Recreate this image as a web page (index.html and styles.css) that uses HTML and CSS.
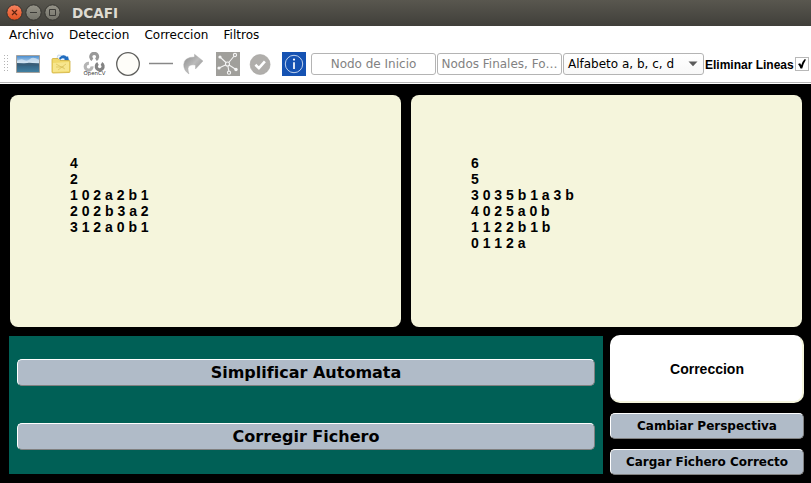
FILE: index.html
```html
<!DOCTYPE html>
<html lang="es">
<head>
<meta charset="utf-8">
<title>DCAFI</title>
<link rel="stylesheet" href="styles.css">
</head>
<body>
<header class="titlebar">
  <svg class="window-controls" width="60" height="26" viewBox="0 0 60 26">
    <defs>
      <linearGradient id="close" x2="0" y2="1"><stop stop-color="#f78461"/><stop offset="1" stop-color="#e2501f"/></linearGradient>
      <linearGradient id="ctrl" x2="0" y2="1"><stop stop-color="#969489"/><stop offset="1" stop-color="#74736a"/></linearGradient>
    </defs>
    <g stroke="#33322e">
      <circle cx="14.5" cy="12.5" r="7.7" fill="url(#close)"/>
      <circle cx="33.5" cy="12.5" r="7.7" fill="url(#ctrl)"/>
      <circle cx="52.5" cy="12.5" r="7.7" fill="url(#ctrl)"/>
    </g>
    <path d="M12 10l5 5M17 10l-5 5" stroke="#5d2411" stroke-width="1.2"/>
    <path d="M30 12.500h7M49.500 9.500h6v6h-6z" stroke="#3c3b37" fill="none"/>
  </svg>
  <h1 class="title">DCAFI</h1>
</header>
<nav class="menu">
  <span>Archivo</span><span>Deteccion</span><span>Correccion</span><span>Filtros</span>
</nav>
<div class="toolbar">
  <div class="grip"></div>
  <div class="tools">
    <svg viewBox="0 0 24 24">
      <defs><linearGradient id="sky" x2="0" y2="1"><stop stop-color="#4389cd"/><stop offset=".45" stop-color="#c5dcef"/><stop offset=".5" stop-color="#325d7c"/><stop offset="1" stop-color="#4382a4"/></linearGradient></defs>
      <path d="M.5 3.500h23v17H.5z" fill="url(#sky)" stroke="#a5a19c"/>
      <path d="M1 9q4-3 7-1t6-1 9 1v3H1z" fill="#dce8f2" opacity=".7"/>
      <path d="M1 11l7 .5 5-.8 10 .8v2H1z" fill="#3a5e78"/>
    </svg>
    <svg viewBox="0 0 24 24">
      <path d="M7 9l2-6 8 1 4 5-2 5H8z" fill="#f1f7fd" stroke="#9bb9d8" stroke-width=".5"/>
      <path d="M10 6q4-5 8-1l1-1 1 5-5-1 1-1q-3-2-5 1z" fill="#216dc0"/>
      <path d="M3 7.500q0-1 1-1h5l2 2h9q1 0 1 1v10q0 1-1 1L4 21q-1 0-1-1z" fill="#f1d96b" stroke="#cfae3a" stroke-width=".8"/>
      <path d="M4 11l16-1v9L4 20z" fill="#f7e68e"/>
      <path d="M7 12l9 5M9 18l8-6M7 15h8" stroke="#d9bf57" stroke-width=".7" fill="none"/>
    </svg>
    <svg viewBox="0 0 24 24">
      <g fill="none" stroke-width="3.200">
        <path d="M9.500 7.700A3.400 3.400 0 1 1 12.900 7.700" stroke="#999"/>
        <path d="M5.900 11.300A3.400 3.400 0 1 0 9 14.400" stroke="#b4b4b4"/>
        <path d="M15 11.500A3.400 3.400 0 1 0 18.400 11.500" stroke="#838383"/>
      </g>
      <text x="11.500" y="23.200" class="logo-text">OpenCV</text>
    </svg>
    <svg viewBox="0 0 24 24"><circle cx="12" cy="12" r="11.300" fill="#fefdf9" stroke="#5f5f5d" stroke-width="1.300"/></svg>
    <svg viewBox="0 0 24 24"><path d="M0 11.500h24" stroke="#888" stroke-width="1.500"/></svg>
    <svg viewBox="0.500 0 24 24">
      <defs><linearGradient id="arrow" x2="1" y2="1"><stop stop-color="#898989"/><stop offset=".5" stop-color="#bbb"/><stop offset="1" stop-color="#888"/></linearGradient></defs>
      <path d="M7.500 22Q2 18.500 2.200 12.500 2.500 5 13 5V2.200L21.500 9 14 17v-4Q7 12 6.500 16.500 6.400 19 7.500 22z" fill="url(#arrow)" stroke="#a8a8a8" stroke-width=".4"/>
    </svg>
    <svg class="graph" viewBox="0 0 24 24">
      <path d="M11.500 12L4 5M11.500 12L19 3M11.500 12L3 16M11.500 12L20 17.500M11.500 12L13 20" stroke="#f4f4f4" stroke-width="1.100"/>
      <g fill="#f6f6f6"><circle cx="4" cy="5" r="1.600"/><circle cx="3" cy="16" r="1.600"/><circle cx="20" cy="17.500" r="1.700"/></g>
      <g fill="#a09f9b" stroke="#f4f4f4" stroke-width="1.100"><circle cx="19" cy="3" r="1.600"/><circle cx="11.500" cy="12" r="2"/><circle cx="13" cy="20.700" r="1.600"/></g>
    </svg>
    <svg viewBox="0.400 0 24 24"><circle cx="11.500" cy="12.500" r="10" fill="#b0aeab" stroke="#a5a3a0" stroke-width=".6"/><path d="M6.800 12.800l3.500 3.300 6-6.700" fill="none" stroke="#fff" stroke-width="2.600"/></svg>
    <svg viewBox="0 0 24 24"><path fill="#1552b2" d="M0 0h24v24H0z"/><circle cx="12" cy="12" r="8.700" fill="none" stroke="#d2dff2" stroke-width=".9"/><path d="M12 10.200v6.800" stroke="#fff" stroke-width="1.700"/><circle cx="12" cy="7.600" r="1.100" fill="#fff"/></svg>
  </div>
  <div class="field">Nodo de Inicio</div>
  <div class="field">Nodos Finales, Fo…</div>
  <div class="combo">Alfabeto a, b, c, d<svg width="10" height="6" viewBox="0 0 10 6"><path d="M.5 .5h9L5 5.300z" fill="#5b5b5b"/></svg></div>
  <span class="check-label">Eliminar Lineas</span>
  <div class="checkbox"><svg width="12" height="12" viewBox="0 0 12 12"><path d="M2 6l2.200-.8 1 2Q6.500 3.300 8.500 1.300l1.500.2Q7.500 5.500 6.200 10.500H4.500Q3.800 8 2 6z" fill="#000"/></svg></div>
</div>
<main class="workspace">
  <section class="panels">
    <pre class="panel">4
2
1 0 2 a 2 b 1
2 0 2 b 3 a 2
3 1 2 a 0 b 1</pre>
    <pre class="panel">6
5
3 0 3 5 b 1 a 3 b
4 0 2 5 a 0 b
1 1 2 2 b 1 b
0 1 1 2 a</pre>
  </section>
  <section class="bottom">
    <div class="actions">
      <button class="button large">Simplificar Automata</button>
      <button class="button large">Corregir Fichero</button>
    </div>
    <div class="side">
      <div class="status">Correccion</div>
      <button class="button">Cambiar Perspectiva</button>
      <button class="button">Cargar Fichero Correcto</button>
    </div>
  </section>
</main>
</body>
</html>
```
FILE: styles.css
```css
* { box-sizing: border-box; }
body {
  margin: 0;
  width: 811px;
  height: 483px;
  overflow: hidden;
  display: flex;
  flex-direction: column;
  background: #000;
  font: 12px "DejaVu Sans", sans-serif;
  color: #000;
}
.titlebar {
  height: 26px;
  display: flex;
  align-items: center;
  background: linear-gradient(#59574f, #403f3a);
}
.window-controls { display: block; }
.title {
  margin: 0 0 0 12px;
  font-size: 13.6px;
  line-height: 27px;
  color: #dfdbd2;
}
.menu {
  height: 18px;
  padding-left: 9px;
  display: flex;
  gap: 15.2px;
  line-height: 18px;
  background: #fff;
}
.toolbar {
  height: 40px;
  flex: none;
  padding-left: 4px;
  display: flex;
  align-items: center;
  background: #fff;
  border-bottom: 1px solid #fff;
  box-shadow: inset 0 -1px #b5b5b5;
}
.grip {
  width: 5px;
  height: 17px;
  margin-right: 7px;
  background: conic-gradient(from 270deg at 1px 1px, #b4b4b4 90deg, transparent 0) 0 0 / 3px 3px;
}
.tools {
  width: 290px;
  margin-right: 5px;
  display: flex;
  justify-content: space-between;
}
.tools svg { width: 24px; height: 24px; display: block; }
.tools .graph { background: #a09f9b; }
.logo-text {
  font: 5.4px "DejaVu Sans", sans-serif;
  text-anchor: middle;
  fill: #333;
}
.field, .combo {
  height: 22px;
  border: 1px solid #b4b4b4;
  border-radius: 3px;
  line-height: 20px;
  white-space: nowrap;
}
.field {
  width: 125px;
  margin-right: 1px;
  text-align: center;
  color: #828282;
}
.combo {
  width: 141px;
  padding: 0 5px 0 4px;
  display: flex;
  align-items: center;
  justify-content: space-between;
  background: linear-gradient(#fff, #f8f8f8);
}
.check-label {
  width: 91px;
  padding: 3px 0 0 1px;
  font: bold 12px "Liberation Sans", sans-serif;
  white-space: nowrap;
}
.checkbox {
  width: 14px;
  height: 14px;
  margin-top: 1px;
  border: 1px solid #b8b8b8;
}
.checkbox svg { display: block; }
.workspace {
  padding: 11px 7px 8px 9px;
}
.panels {
  display: flex;
  gap: 10px;
  margin-left: 1px;
}
.panel {
  width: 391px;
  height: 232px;
  margin: 0;
  padding: 60px;
  border-radius: 8px;
  background: #f5f5dc;
  font: bold 14px/16px "Liberation Sans", sans-serif;
}
.bottom {
  margin-top: 8px;
  display: flex;
  gap: 7px;
}
.actions {
  width: 594px;
  height: 138px;
  margin-top: 1px;
  padding: 23px 8px 24px;
  display: flex;
  flex-direction: column;
  justify-content: space-between;
  background: #006056;
}
.side {
  width: 194px;
  display: flex;
  flex-direction: column;
  gap: 10px;
}
.status {
  height: 68px;
  border: 2px solid;
  border-color: #fff #f5f5dc #f5f5dc #fff;
  border-radius: 10px;
  background: #fff;
  text-align: center;
  font: bold 14px/64px "Liberation Sans", sans-serif;
}
.button {
  height: 26px;
  padding: 0;
  border: 1px solid;
  border-color: #fff #808080 #808080 #fff;
  border-radius: 5px;
  background: #b0bbc8;
  font: bold 12px "DejaVu Sans", sans-serif;
  color: #000;
}
.large {
  height: 27px;
  font-size: 16px;
}
```
